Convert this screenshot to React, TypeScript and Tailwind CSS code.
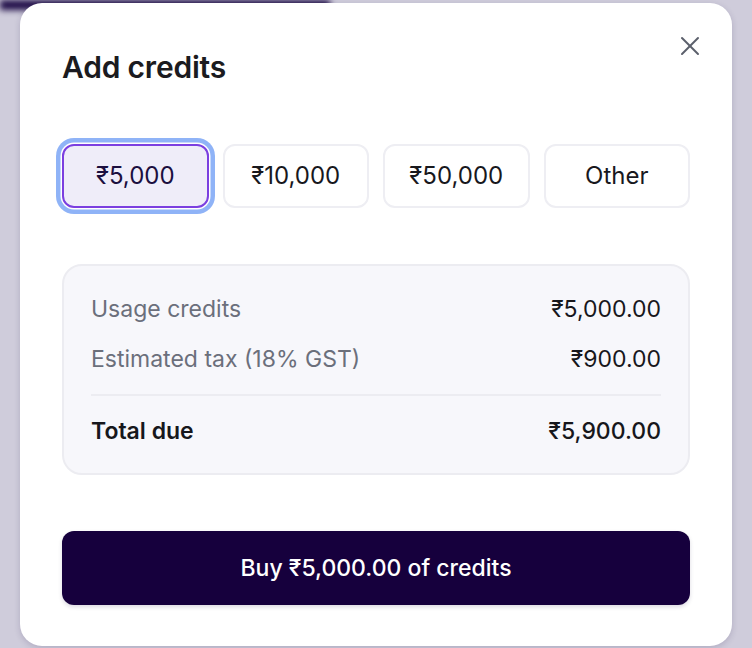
import { X } from 'lucide-react';

const amounts = ['₹5,000', '₹10,000', '₹50,000', 'Other'];

const Row = ({ label, value, bold }: { label: string; value: string; bold?: boolean }) => (
  <div className="flex h-[28px] items-center justify-between">
    <span className={bold ? 'font-semibold text-[#17171c]' : 'text-[#6b6f7b]'}>{label}</span>
    <span className={bold ? 'font-medium text-[#17171c]' : 'text-[#17171c]'}>{value}</span>
  </div>
);

export default function App() {
  return (
    <div className="relative h-[648px] w-[752px] overflow-hidden bg-[#cfccdb] font-['Inter',sans-serif]">
      {/* page behind the overlay */}
      <div className="h-[10px] w-[330px] bg-[#1c0a45] blur-[3px]" />

      <div className="absolute left-[20px] top-[3px] flex h-[643px] w-[712px] flex-col rounded-[22px] bg-white px-[42px] shadow-[0_2px_6px_rgba(40,30,80,0.18)]">
        <div className="flex items-start justify-between pt-[45px]">
          <h2 className="text-[30px] font-semibold leading-[38px] tracking-[-0.2px] text-[#1b1b20]">Add credits</h2>
          <button className="-mr-[16px] -mt-[18px] text-[#5b5f6b]">
            <X size={32} strokeWidth={1.5} />
          </button>
        </div>

        <div className="mt-[58px] grid grid-cols-4 gap-[14px]">
          {amounts.map((a, i) =>
            i === 0 ? (
              <button
                key={a}
                className="flex h-[64px] items-center justify-center rounded-[12px] border-2 border-[#7b3fe0] bg-[#efedf9] text-[24px] text-[#1b0f3f] shadow-[0_0_0_1.5px_#ffffff,0_0_0_6px_#8fb3f7]"
              >
                {a}
              </button>
            ) : (
              <button
                key={a}
                className="flex h-[64px] items-center justify-center rounded-[12px] border-2 border-[#eeeef3] bg-white text-[24px] text-[#18181d]"
              >
                {a}
              </button>
            )
          )}
        </div>

        <div className="mt-[56px] flex flex-col rounded-[20px] border-2 border-[#ececf1] bg-[#f7f7fb] px-[27px] pb-[28px] pt-[29px] text-[23px]">
          <Row label="Usage credits" value="₹5,000.00" />
          <div className="mt-[22px]">
            <Row label="Estimated tax (18% GST)" value="₹900.00" />
          </div>
          <div className="mt-[21px] h-[2px] bg-[#ececf1]" />
          <div className="mt-[21px]">
            <Row label="Total due" value="₹5,900.00" bold />
          </div>
        </div>

        <button className="mt-[56px] flex h-[74px] w-full items-center justify-center rounded-[12px] bg-[#16003d] text-[23px] font-medium text-white shadow-[0_2px_4px_rgba(22,0,61,0.15)]">
          Buy ₹5,000.00 of credits
        </button>
      </div>
    </div>
  );
}
